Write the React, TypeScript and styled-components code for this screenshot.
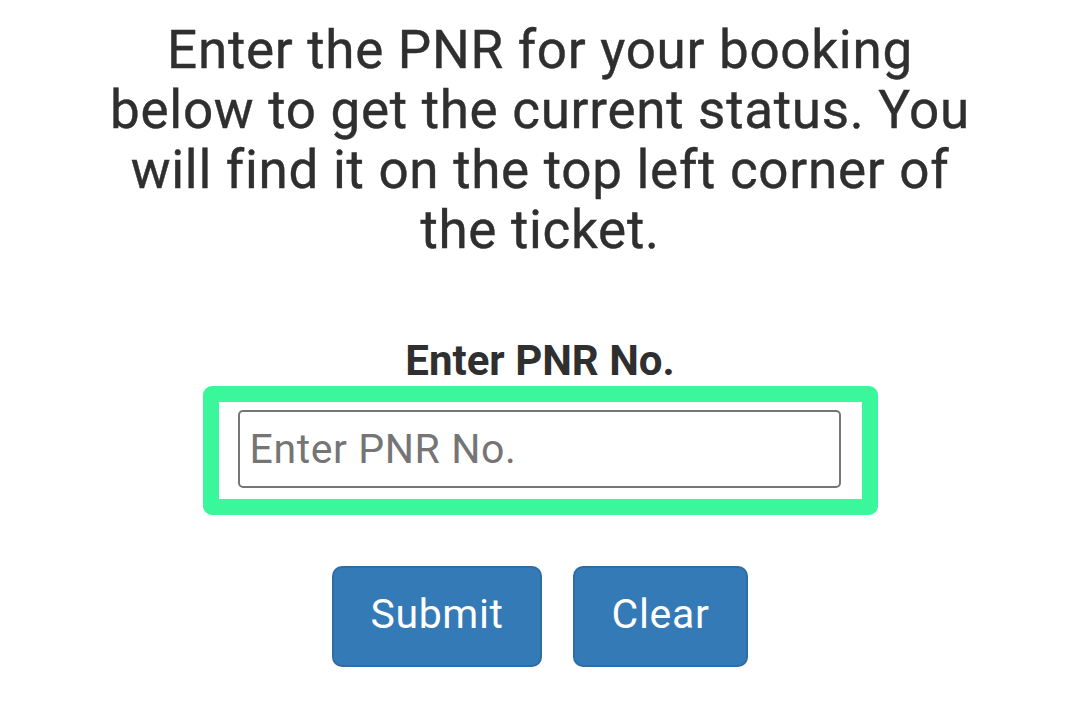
import React from "react";
import styled, { createGlobalStyle } from "styled-components";

const Global = createGlobalStyle`
  html, body { margin: 0; padding: 0; background: #ffffff; }
  body { font-family: Roboto, "Noto Sans", Arial, sans-serif; color: #333333; }
  * { box-sizing: border-box; }
`;

const Page = styled.div`
  width: 1080px;
  height: 712px;
  display: flex;
  flex-direction: column;
  align-items: center;
  padding-top: 20px;
  overflow: hidden;
`;

const Intro = styled.p`
  margin: 0;
  width: 880px;
  text-align: center;
  font-size: 53px;
  line-height: 60px;
  font-weight: 400;
  letter-spacing: 0.7px;
  color: #2f2f2f;
  -webkit-text-stroke: 0.4px #2f2f2f;
`;

const Form = styled.form`
  display: flex;
  flex-direction: column;
  align-items: center;
  margin-top: 78px;
`;

const Label = styled.label`
  font-size: 42px;
  line-height: 46px;
  font-weight: 700;
  color: #2f2f2f;
  margin-bottom: 2px;
`;

const Highlight = styled.div`
  width: 675px;
  height: 129px;
  border: 16px solid #3af79b;
  border-radius: 9px;
  background: #ffffff;
  padding: 8px 21px 9px 19px;
  display: flex;
`;

const Input = styled.input`
  flex: 1;
  height: 78px;
  border: 2px solid #767676;
  border-radius: 5px;
  padding: 0 10px;
  font-family: Roboto, "Noto Sans", Arial, sans-serif;
  font-size: 41px;
  letter-spacing: 0.6px;
  color: #333;
  background: #fff;
  &::placeholder { color: #757575; opacity: 1; }
  &:focus { outline: none; }
`;

const Buttons = styled.div`
  display: flex;
  gap: 31px;
  margin-top: 51px;
`;

const Button = styled.button<{ $w: number }>`
  width: ${(p) => p.$w}px;
  height: 101px;
  background: #337ab7;
  border: 2px solid #2e6da4;
  border-radius: 10px;
  color: #ffffff;
  font-family: Roboto, "Noto Sans", Arial, sans-serif;
  font-size: 41px;
  font-weight: 400;
  letter-spacing: 0.65px;
  padding: 0 0 6px;
  cursor: pointer;
`;

export default function App() {
  return (
    <>
      <Global />
      <Page>
        <Intro>
          Enter the PNR for your booking below to get the current status. You will find it on the top left corner of the ticket.
        </Intro>
        <Form onSubmit={(e) => e.preventDefault()}>
          <Label htmlFor="pnr">Enter PNR No.</Label>
          <Highlight>
            <Input id="pnr" type="text" placeholder="Enter PNR No." />
          </Highlight>
          <Buttons>
            <Button $w={210} type="submit">Submit</Button>
            <Button $w={175} type="button">Clear</Button>
          </Buttons>
        </Form>
      </Page>
    </>
  );
}
